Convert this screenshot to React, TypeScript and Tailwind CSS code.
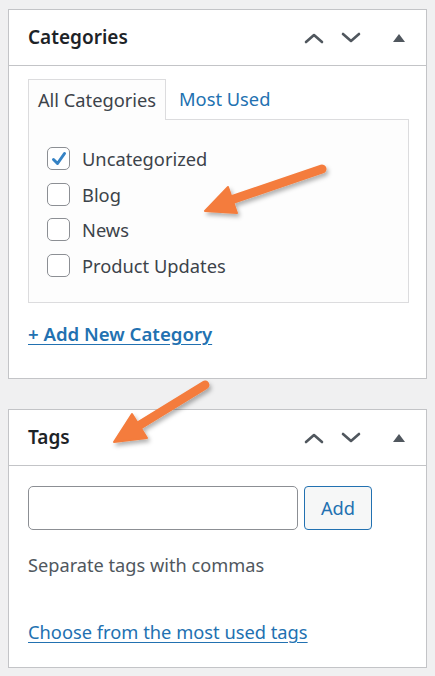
import React from "react"

const font = { fontFamily: '"Noto Sans", "Open Sans", sans-serif' }

function HeaderIcons() {
  return (
    <div className="flex items-center text-[#50575e]">
      <svg width="22" height="14" viewBox="0 0 22 14" className="mr-[15px]">
        <path d="M3 11 L11 4 L19 11" fill="none" stroke="currentColor" strokeWidth="2.6" strokeLinecap="round" strokeLinejoin="round" />
      </svg>
      <svg width="22" height="14" viewBox="0 0 22 14" className="mr-[30px]">
        <path d="M3 3 L11 10 L19 3" fill="none" stroke="currentColor" strokeWidth="2.6" strokeLinecap="round" strokeLinejoin="round" />
      </svg>
      <svg width="14" height="12" viewBox="0 0 14 12">
        <path d="M7 2 L13 10 L1 10 Z" fill="currentColor" />
      </svg>
    </div>
  )
}

function Panel({ title, children, className }: { title: string; children: React.ReactNode; className?: string }) {
  return (
    <div className={"w-[419px] border border-[#c3c4c7] bg-white " + (className ?? "")}>
      <div className="flex h-[56px] items-center justify-between border-b border-[#c3c4c7] pl-[19px] pr-[20px]">
        <h2 className="text-[19px] font-semibold text-[#1d2327]">{title}</h2>
        <HeaderIcons />
      </div>
      {children}
    </div>
  )
}

function Check({ label, checked }: { label: string; checked?: boolean }) {
  return (
    <label className="flex h-[35.5px] items-center">
      <span className="flex h-[23px] w-[23px] items-center justify-center rounded-[5px] border border-[#8c8f94] bg-white">
        {checked && (
          <svg width="18" height="18" viewBox="0 0 18 18">
            <path d="M3.5 9.5 L7.5 13.5 L14.5 3.5" fill="none" stroke="#3582c4" strokeWidth="3" strokeLinecap="round" strokeLinejoin="round" />
          </svg>
        )}
      </span>
      <span className="ml-[12px] text-[18.3px] text-[#3c434a]">{label}</span>
    </label>
  )
}

export default function App() {
  return (
    <div className="relative h-[676px] w-[435px] overflow-hidden bg-[#f0f0f1] pl-[8px] pt-[9px]" style={font}>
      <Panel title="Categories" className="h-[370px]">
        <div className="px-[19px] pt-[12px]">
          <div className="flex h-[41px] items-end">
            <div className="relative z-10 -mb-px flex h-[41px] w-[138px] items-center justify-center border border-b-0 border-[#dcdcde] bg-[#fdfdfd] text-[18.3px] text-[#3c434a]">
              All Categories
            </div>
            <div className="flex h-[41px] items-center pl-[13px] text-[18.3px] text-[#2271b1]">Most Used</div>
          </div>
          <div className="h-[184px] w-[381px] border border-[#dcdcde] bg-[#fdfdfd] pl-[18px] pt-[21px]">
            <Check label="Uncategorized" checked />
            <Check label="Blog" />
            <Check label="News" />
            <Check label="Product Updates" />
          </div>
          <a href="#" className="mt-[17px] block text-[18.6px] font-semibold text-[#2271b1] underline underline-offset-[3px]">
            + Add New Category
          </a>
        </div>
      </Panel>

      <Panel title="Tags" className="mt-[30px] h-[259px]">
        <div className="px-[19px] pt-[20px]">
          <div className="flex">
            <input className="h-[44px] w-[270px] rounded-[5px] border border-[#8c8f94] bg-white" />
            <button className="ml-[6px] h-[44px] w-[68px] rounded-[4px] border border-[#2271b1] bg-[#f6f7f7] text-[18.3px] text-[#2271b1]">
              Add
            </button>
          </div>
          <p className="mt-[22px] text-[18.2px] text-[#50575e]">Separate tags with commas</p>
          <a href="#" className="mt-[39px] block text-[18.3px] text-[#2271b1] underline underline-offset-[3px]">
            Choose from the most used tags
          </a>
        </div>
      </Panel>

      <svg className="pointer-events-none absolute left-0 top-0" width="435" height="676" viewBox="0 0 435 676">
        <defs>
          <filter id="sh" x="-20%" y="-20%" width="140%" height="140%">
            <feDropShadow dx="2" dy="3" stdDeviation="2" floodColor="#000" floodOpacity="0.3" />
          </filter>
        </defs>
        <g filter="url(#sh)" fill="#f47c3c" stroke="#f47c3c" strokeLinecap="round" strokeLinejoin="round">
          <line x1="322" y1="169" x2="225" y2="202" strokeWidth="9" />
          <path d="M205 211 L228 187 L237 213 Z" strokeWidth="2" />
          <line x1="205" y1="385" x2="135" y2="428" strokeWidth="9" />
          <path d="M114 442 L132 414 L147 438 Z" strokeWidth="2" />
        </g>
      </svg>
    </div>
  )
}
